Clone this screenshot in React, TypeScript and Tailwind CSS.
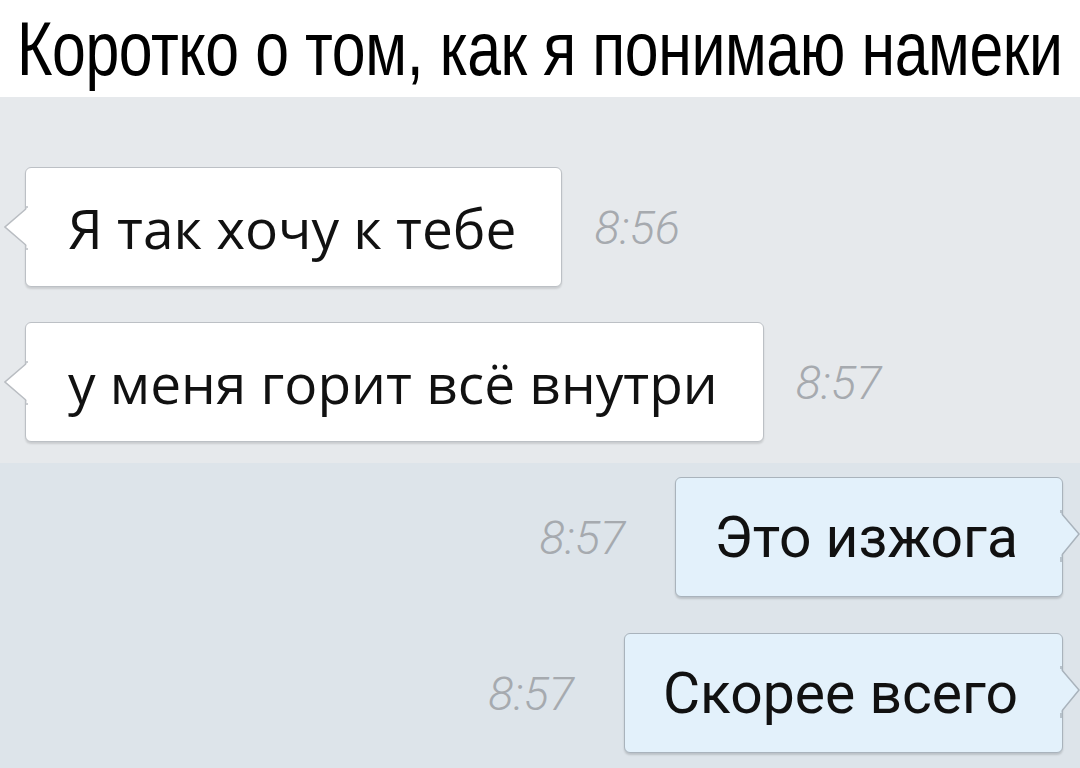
const incoming = [
  { text: "Я так хочу к тебе", time: "8:56" },
  { text: "у меня горит всё внутри", time: "8:57" },
];

const outgoing = [
  { text: "Это изжога", time: "8:57" },
  { text: "Скорее всего", time: "8:57" },
];

function TailLeft() {
  return (
    <svg className="absolute -left-[22px] top-[38px]" width="24" height="44" viewBox="0 0 24 44">
      <path d="M23 0 L23 2 L1 21 L23 40 L23 44" fill="#ffffff" stroke="#b9bdc2" strokeWidth="1.5" />
      <rect x="22.5" y="2" width="3" height="40" fill="#ffffff" />
    </svg>
  );
}

function TailRight() {
  return (
    <svg className="absolute -right-[18px] top-[32px]" width="20" height="52" viewBox="0 0 20 52">
      <path d="M1 0 L1 3 L19 24 L1 46 L1 52" fill="#e3f1fb" stroke="#a9b3bc" strokeWidth="1.5" />
      <rect x="-1" y="3" width="2.5" height="44" fill="#e3f1fb" />
    </svg>
  );
}

function Time({ value }: { value: string }) {
  return (
    <span className="font-['Roboto',sans-serif] text-[47px] font-light italic leading-none text-[#a6aaaf]">
      {value}
    </span>
  );
}

export default function App() {
  return (
    <div className="flex h-[768px] w-[1080px] flex-col overflow-hidden bg-white">
      <header className="flex h-[97px] shrink-0 items-center bg-white pl-[17px]">
        <h1 className="origin-left scale-x-[0.8] whitespace-nowrap font-['Liberation_Sans',Arial,sans-serif] text-[76px] leading-none tracking-[-0.5px] text-black">
          Коротко о том, как я понимаю намеки
        </h1>
      </header>

      <section className="flex h-[366px] shrink-0 flex-col gap-[35px] bg-[#e6e9ec] pl-[25px] pt-[70px]">
        {incoming.map((m) => (
          <div key={m.text} className="flex items-center gap-[32px]">
            <div className="relative flex h-[120px] items-center rounded-[6px] border border-[#bcc0c5] bg-white pl-[42px] pr-[45px] shadow-[0_2px_2px_rgba(0,0,0,0.12)]">
              <TailLeft />
              <span className="font-['Open_Sans',sans-serif] text-[55px] leading-none text-[#111]">{m.text}</span>
            </div>
            <Time value={m.time} />
          </div>
        ))}
      </section>

      <section className="flex flex-1 flex-col items-end gap-[36px] bg-[#dde4ea] pr-[17px] pt-[14px]">
        {outgoing.map((m) => (
          <div key={m.text} className="flex items-center gap-[50px]">
            <Time value={m.time} />
            <div className="relative flex h-[120px] items-center rounded-[6px] border border-[#a9b3bc] bg-[#e3f1fb] pl-[38px] pr-[44px] shadow-[0_2px_2px_rgba(0,0,0,0.15)]">
              <TailRight />
              <span className="font-['Roboto',sans-serif] text-[57px] leading-none text-[#111]">{m.text}</span>
            </div>
          </div>
        ))}
      </section>
    </div>
  );
}
